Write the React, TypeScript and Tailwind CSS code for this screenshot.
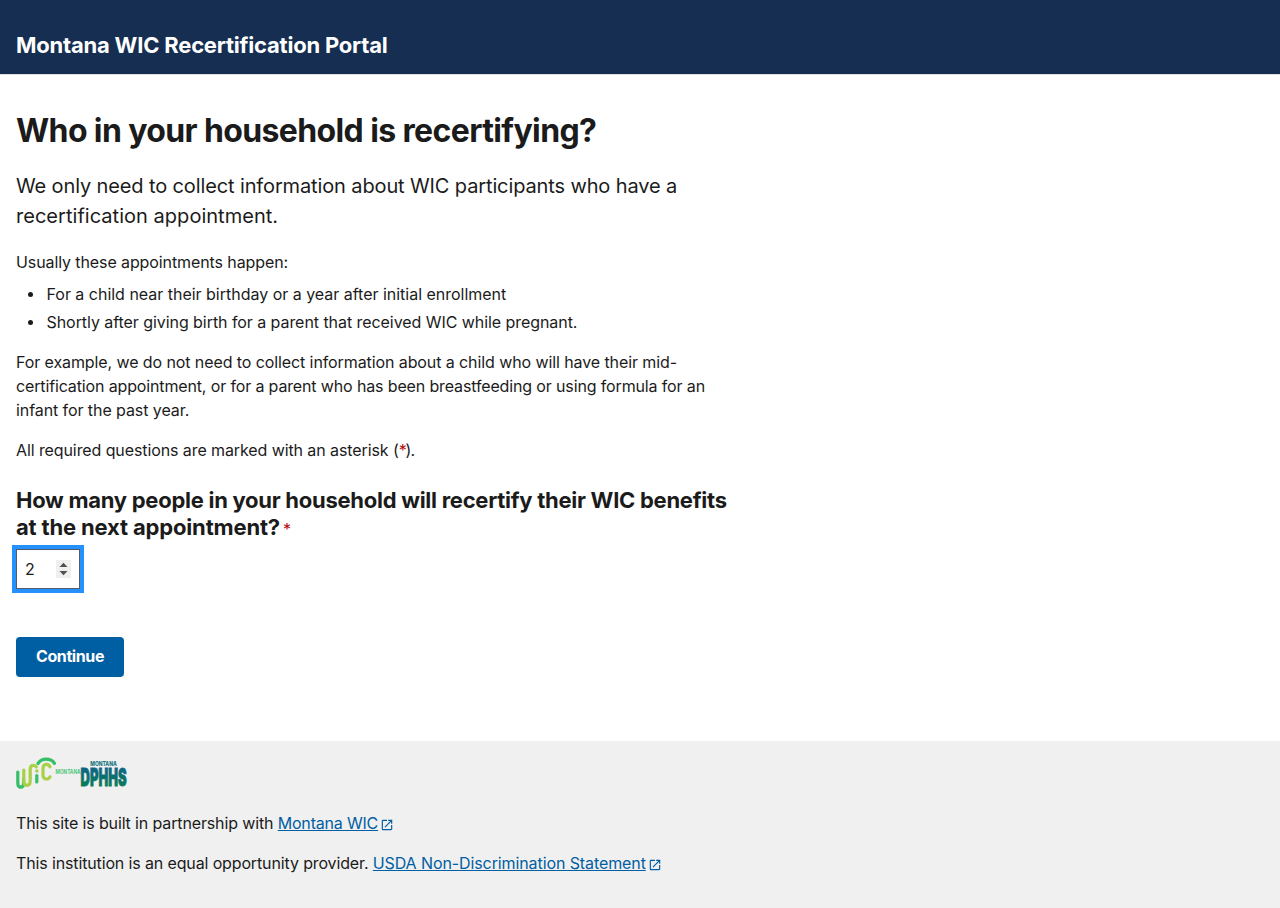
import React from 'react';

function ExternalIcon() {
  return (
    <svg viewBox="0 0 24 24" className="ml-0.5 mt-1 size-3.5 shrink-0 self-center" fill="currentColor" aria-hidden="true">
      <path d="M19 19H5V5h7V3H5a2 2 0 0 0-2 2v14a2 2 0 0 0 2 2h14c1.1 0 2-.9 2-2v-7h-2v7zM14 3v2h3.59l-9.83 9.83 1.41 1.41L19 6.41V10h2V3h-7z" />
    </svg>
  );
}

function Logo() {
  return (
    <svg viewBox="0 0 112 32" className="block h-8 w-28 overflow-visible" role="img" aria-label="Montana WIC, Montana DPHHS">
      <g fill="none" strokeLinecap="round" strokeWidth="3.2">
        <path d="M1.8 15V26Q1.8 30.2 4.7 30.2Q7.6 30.2 7.6 26V22" stroke="#35bf66" />
        <path d="M7.8 13V24Q7.8 28.3 11 28.3Q14.2 28.3 14.2 24V12.5Q14.2 8.4 17.2 8.4Q19.4 8.4 20.4 10" stroke="#a9d046" />
        <path d="M20.8 18.5V25" stroke="#35bf66" />
        <path d="M34 9.8Q32.8 7.3 30.4 7.3Q27 7.3 27 12V17.5Q27 22 30.4 22Q33 22 34 19.8" stroke="#a9d046" />
        <path d="M22 6.5Q25 2.2 30 2.2Q36 2.2 38.4 6.4" stroke="#35bf66" />
      </g>
      <circle cx="20.8" cy="14" r="1.8" fill="#a9d046" />
      <text x="39.5" y="17.2" textLength="25" lengthAdjust="spacingAndGlyphs" fontSize="5.6" fontWeight="700" fill="#4fc878" fontFamily="Inter, sans-serif">MONTANA</text>
      <text x="74.3" y="8.8" textLength="26.4" lengthAdjust="spacingAndGlyphs" fontSize="6.4" fontWeight="800" fill="#17757f" fontFamily="Inter, sans-serif">MONTANA</text>
      <defs>
        <linearGradient id="dphhs" x1="0" y1="0" x2="0" y2="1">
          <stop offset="0.2" stopColor="#0d6584" />
          <stop offset="0.9" stopColor="#078052" />
        </linearGradient>
      </defs>
      <text x="64.6" y="29" textLength="46" lengthAdjust="spacingAndGlyphs" fontSize="24.5" fontWeight="900" fill="url(#dphhs)" stroke="url(#dphhs)" strokeWidth="0.9" fontFamily="Inter, sans-serif">DPHHS</text>
    </svg>
  );
}

export default function App() {
  return (
    <div className="flex min-h-screen flex-col bg-white font-['Inter',sans-serif] text-base leading-6 text-[#1b1b1b]">
      <header className="h-[75px] border-b border-[#dfe1e2] bg-[#162e51] px-4 pt-8">
        <div className="text-[22px] leading-[27px] font-bold tracking-[-0.21px] whitespace-nowrap text-white">Montana WIC Recertification Portal</div>
      </header>
      <main className="h-[666px] px-4 pt-9 whitespace-nowrap">
        <h1 className="text-[32px] leading-10 font-bold tracking-[-0.62px]">Who in your household is recertifying?</h1>
        <p className="mt-5 text-xl leading-[30px]">
          <span className="block tracking-[-0.125px]">We only need to collect information about WIC participants who have a</span>
          <span className="block tracking-[0.03px]">recertification appointment.</span>
        </p>
        <p className="mt-[19px] tracking-[-0.1px]">Usually these appointments happen:</p>
        <ul className="mt-2 space-y-1">
          <li className="flex tracking-[-0.015px]">
            <span className="mt-[10px] mr-[13.5px] ml-3 size-[5px] rounded-full bg-[#1b1b1b]" />
            For a child near their birthday or a year after initial enrollment
          </li>
          <li className="flex tracking-[-0.06px]">
            <span className="mt-[10px] mr-[13.5px] ml-3 size-[5px] rounded-full bg-[#1b1b1b]" />
            Shortly after giving birth for a parent that received WIC while pregnant.
          </li>
        </ul>
        <p className="mt-4">
          <span className="block tracking-[-0.095px]">For example, we do not need to collect information about a child who will have their mid-</span>
          <span className="block tracking-[-0.14px]">certification appointment, or for a parent who has been breastfeeding or using formula for an</span>
          <span className="block tracking-[-0.08px]">infant for the past year.</span>
        </p>
        <p className="mt-4 tracking-[-0.095px]">All required questions are marked with an asterisk (<span className="tracking-[-1.2px] text-[#b50909]">*</span><span className="tracking-[-0.9px]">).</span></p>
        <form onSubmit={(e) => e.preventDefault()}>
          <label htmlFor="count" className="mt-[25px] block text-[22px] leading-[27px] font-bold">
            <span className="block tracking-[-0.27px]">How many people in your household will recertify their WIC benefits</span>
            <span className="block tracking-[-0.16px]">at the next appointment? <span className="-ml-0.5 text-base font-normal text-[#b50909]">*</span></span>
          </label>
          <div className="mt-2 flex h-10 w-16 items-center justify-between border border-[#565c65] pr-2 pl-2 outline-4 outline-[#2491ff]">
            <input id="count" defaultValue="2" className="w-6 bg-transparent outline-none" />
            <span className="flex h-[18px] w-[15px] items-center justify-center bg-[#efefef]">
              <svg viewBox="0 0 15 18" className="h-[18px] w-[15px]" fill="#505050" aria-hidden="true">
                <path d="M3.5 7L7.5 2.8L11.5 7ZM3.5 11L7.5 15.2L11.5 11Z" />
              </svg>
            </span>
          </div>
          <button className="mt-12 flex h-10 w-[108px] items-center justify-center rounded bg-[#005ea2] pb-0.5 font-bold tracking-[-0.4px] text-white">Continue</button>
        </form>
      </main>
      <footer className="flex-1 bg-[#f0f0f0] px-4 pt-4 whitespace-nowrap">
        <Logo />
        <p className="mt-[22px] flex">
          <span className="tracking-[-0.135px]">This site is built in partnership with&nbsp;</span>
          <a href="#wic" className="flex text-[#005ea2]"><span className="tracking-[-0.19px] underline">Montana WIC</span><ExternalIcon /></a>
        </p>
        <p className="mt-4 flex">
          <span className="tracking-[-0.135px]">This institution is an equal opportunity provider.&nbsp;</span>
          <a href="#usda" className="flex text-[#005ea2]"><span className="tracking-[-0.1px] underline">USDA Non-Discrimination Statement</span><ExternalIcon /></a>
        </p>
      </footer>
    </div>
  );
}
